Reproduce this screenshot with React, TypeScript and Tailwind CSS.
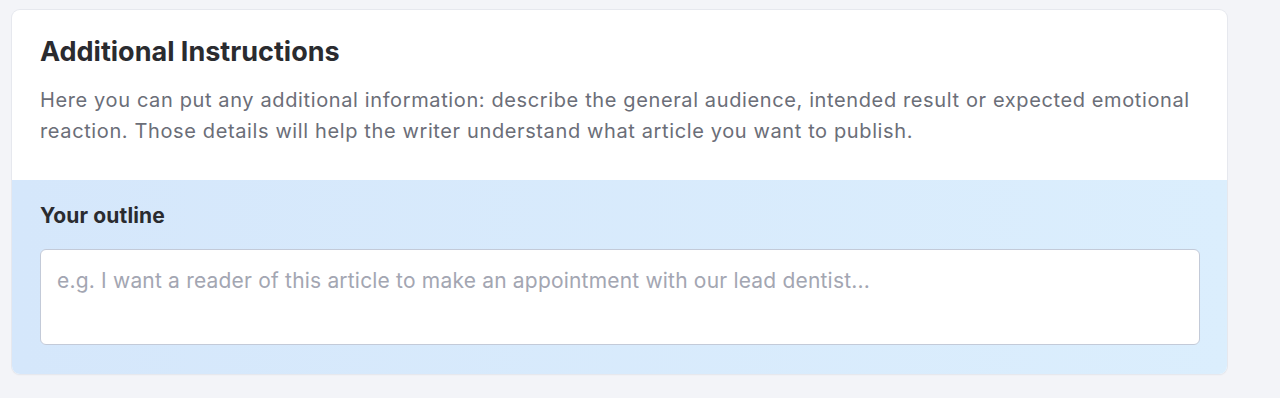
export default function App() {
  return (
    <div
      className="min-h-[398px] bg-[#f3f4f8] pt-[10px] pl-[12px]"
      style={{ fontFamily: 'Inter, "Noto Sans", sans-serif' }}
    >
      <div className="w-[1215px] overflow-hidden rounded-lg bg-white shadow-[0_0_0_1px_#e6e8ee,0_1px_2px_rgba(0,0,0,0.06)]">
        {/* header */}
        <div className="px-[28px] pt-[26px] pb-[33px]">
          <h2 className="text-[27px] font-bold leading-[32px] text-[#2a2b2f]">Additional Instructions</h2>
          <p className="mt-[17px] text-[20px] leading-[31px] tracking-[0.62px] text-[#6b6e78]">
            Here you can put any additional information: describe the general audience, intended result or expected emotional
            reaction. Those details will help the writer understand what article you want to publish.
          </p>
        </div>

        {/* outline */}
        <div className="bg-gradient-to-r from-[#d5e7fb] to-[#dbeefd] px-[28px] pt-[22px] pb-[29px]">
          <label className="block text-[21px] font-bold leading-[28px] tracking-[0.15px] text-[#2a2b2f]">Your outline</label>
          <textarea
            className="mt-[19px] block h-[96px] w-[1160px] resize-none rounded-md border border-[#c3cad8] bg-white px-[16px] py-[17px] text-[21px] leading-[28px] tracking-[0.19px] text-[#2a2b2f] outline-none placeholder:text-[#a3a6b2]"
            placeholder="e.g. I want a reader of this article to make an appointment with our lead dentist..."
          />
        </div>
      </div>
    </div>
  )
}
